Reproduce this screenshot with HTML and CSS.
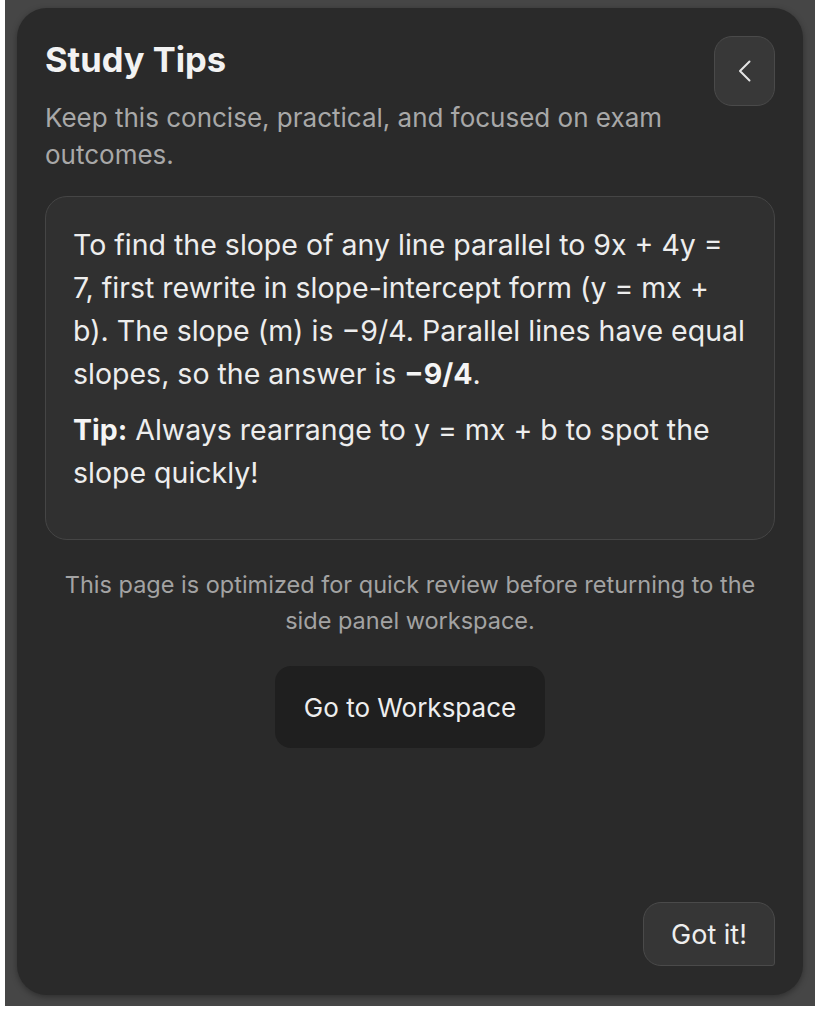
FILE: index.html
```html
<!DOCTYPE html>
<html lang="en">
<head>
<meta charset="utf-8">
<title>Study Tips</title>
<link rel="stylesheet" href="styles.css">
</head>
<body>
<div class="frame">
  <main class="panel">
    <header class="header">
      <div class="heading">
        <h1 class="title">Study Tips</h1>
        <p class="subtitle">Keep this concise, practical, and focused on exam outcomes.</p>
      </div>
      <button class="back" aria-label="Back">
        <svg width="16" height="26" viewBox="0 0 16 26" aria-hidden="true"><path d="M12.5 3.5 L3 13 L12.5 22.5" fill="none" stroke="#e4e4e4" stroke-width="2" stroke-linecap="round" stroke-linejoin="round"/></svg>
      </button>
    </header>
    <section class="card">
      <p class="card-text">To find the slope of any line parallel to 9x + 4y = 7, first rewrite in slope-intercept form (y = mx + b). The slope (m) is −9/4. Parallel lines have equal slopes, so the answer is <strong>−9/4</strong>.</p>
      <p class="card-text tip"><strong>Tip:</strong> Always rearrange to y = mx + b to spot the slope quickly!</p>
    </section>
    <p class="note">This page is optimized for quick review before returning to the side panel workspace.</p>
    <div class="center">
      <button class="workspace">Go to Workspace</button>
    </div>
    <div class="bottom">
      <button class="gotit">Got it!</button>
    </div>
  </main>
</div>
</body>
</html>
```
FILE: styles.css
```css
html, body {
  margin: 0;
  padding: 0;
  background: #ffffff;
}
body {
  font-family: Inter, "Noto Sans", "Liberation Sans", sans-serif;
}
.frame {
  margin-left: 5px;
  width: 810px;
  height: 1006px;
  box-sizing: border-box;
  padding: 8px 12px 11px;
  background: #464646;
}
.panel {
  height: 100%;
  box-sizing: border-box;
  background: #2a2a2a;
  border-radius: 30px;
  padding: 28px 28px 29px;
  display: flex;
  flex-direction: column;
  box-shadow: 0 2px 6px rgba(0,0,0,0.35);
}
.header {
  display: flex;
  justify-content: space-between;
  align-items: flex-start;
}
.heading {
  width: 650px;
}
.title {
  margin: 2px 0 0;
  font-size: 34.5px;
  line-height: 44px;
  font-weight: 700;
  color: #f2f2f2;
}
.subtitle {
  margin: 17px 0 0;
  font-size: 26px;
  line-height: 37px;
  color: #a8a8a8;
}
.back {
  width: 61px;
  height: 70px;
  border-radius: 18px;
  background: #383838;
  border: 1px solid #4a4a4a;
  display: flex;
  align-items: center;
  justify-content: center;
  padding: 0;
}
.card {
  margin-top: 23px;
  background: #303030;
  border: 1px solid #454545;
  border-radius: 22px;
  padding: 26px 27px 45px 27px;
}
.card-text {
  margin: 0;
  font-size: 28.5px;
  line-height: 43px;
  color: #ededed;
}
.card-text.tip {
  margin-top: 13px;
}
.card-text strong {
  font-weight: 700;
  color: #f5f5f5;
}
.note {
  margin: 27px 0 0;
  padding: 0 15px;
  text-align: center;
  font-size: 23.5px;
  line-height: 36px;
  color: #a3a3a3;
}
.center {
  display: flex;
  justify-content: center;
  margin-top: 27px;
}
.workspace {
  width: 270px;
  height: 82px;
  border: none;
  border-radius: 16px;
  background: #1f1f1f;
  color: #eeeeee;
  font-family: inherit;
  font-size: 26px;
}
.bottom {
  margin-top: auto;
  display: flex;
  justify-content: flex-end;
}
.gotit {
  width: 132px;
  height: 64px;
  border: 1px solid #4a4a4a;
  border-radius: 18px 18px 3px 18px;
  background: #363636;
  color: #eeeeee;
  font-family: inherit;
  font-size: 27px;
}
```
